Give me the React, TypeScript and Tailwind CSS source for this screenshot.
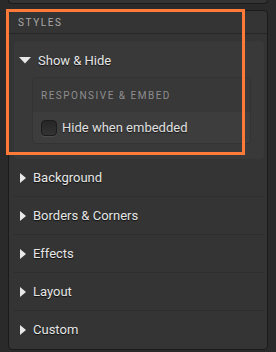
const Caret = ({ open }: { open?: boolean }) =>
  open ? (
    <svg width="12" height="7" viewBox="0 0 12 7" className="shrink-0">
      <path d="M0 0 L12 0 L6 6.5 Z" fill="#e8e8e8" />
    </svg>
  ) : (
    <svg width="6" height="10" viewBox="0 0 6 10" className="shrink-0">
      <path d="M0 0 L6 5 L0 10 Z" fill="#e8e8e8" />
    </svg>
  );

const sections = ["Background", "Borders & Corners", "Effects", "Layout", "Custom"];

export default function App() {
  return (
    <div className="relative w-[276px] h-[352px] overflow-hidden bg-[#2a2a2a] px-2 font-['Roboto',sans-serif]">
      {/* end of the panel above */}
      <div className="h-[4px] rounded-b-[4px] border border-t-0 border-[#1b1b1b] bg-[#333333]" />

      <div className="mt-[6px] h-[340px] rounded-[4px] border border-[#1b1b1b] bg-[#343434]">
        <div className="flex h-[23px] items-center border-b border-[#262626] px-[9px] pt-[1px] text-[10px] tracking-[1.6px] text-[#a9a9a9]">
          STYLES
        </div>

        <div className="pl-[5px] pr-[3px] pt-[7px]">
          <div className="rounded-[4px] bg-[#393939] pb-[15px]">
            <div className="flex h-[36px] items-center gap-[7px] pl-[5px] pt-[3px] text-[13px] text-[#e6e6e6] [text-shadow:0_1px_1px_rgba(0,0,0,0.7)]">
              <Caret open />
              Show &amp; Hide
            </div>
            <div className="ml-[18px] mr-[13px] overflow-hidden rounded-[4px] border border-[#333333] bg-[#3d3d3d]">
              <div className="flex h-[34px] items-center bg-[#383838] px-[8px] pt-[1px] text-[10px] tracking-[1.5px] text-[#8e8e8e]">
                RESPONSIVE &amp; EMBED
              </div>
              <div className="flex h-[31px] items-center gap-[5px] px-[8px] text-[13px] text-[#e0e0e0] [text-shadow:0_1px_1px_rgba(0,0,0,0.6)]">
                <span className="h-[16px] w-[16px] rounded-[4px] border border-[#1c1c1c] bg-[linear-gradient(#262626,#333333)] shadow-[0_1px_0_rgba(255,255,255,0.08)]" />
                Hide when embedded
              </div>
            </div>
          </div>

          {sections.map((s, i) => (
            <div
              key={s}
              className={`flex h-[38px] items-center gap-[7px] pl-[6px] text-[13px] text-[#e6e6e6] [text-shadow:0_1px_1px_rgba(0,0,0,0.7)] ${
                i < sections.length - 1 ? "border-b border-[#2d2d2d]" : ""
              }`}
            >
              <Caret />
              {s}
            </div>
          ))}
        </div>
      </div>

      {/* highlight */}
      <div className="absolute left-[6px] top-[9px] h-[146px] w-[239px] border-[3px] border-[#ff7a38]" />
    </div>
  );
}
